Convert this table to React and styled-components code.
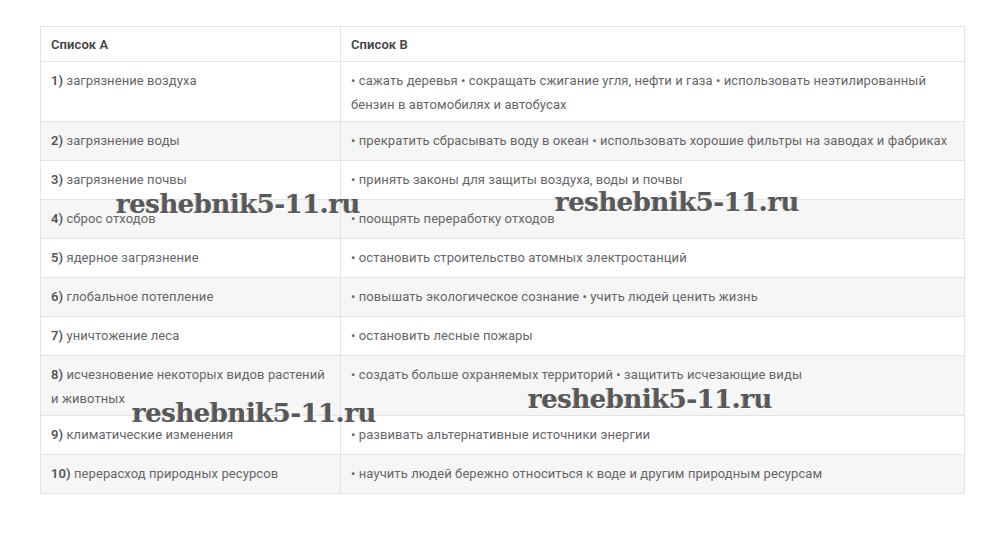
import React from 'react';
import styled, { createGlobalStyle } from 'styled-components';

const GlobalStyle = createGlobalStyle`
    body {
        margin: 0;
        background: #fff;
        font-family: Roboto, "Noto Sans", sans-serif;
    }
`

const rows = [
    ['1)', 'загрязнение воздуха', '• сажать деревья • сокращать сжигание угля, нефти и газа • использовать неэтилированный бензин в автомобилях и автобусах'],
    ['2)', 'загрязнение воды', '• прекратить сбрасывать воду в океан • использовать хорошие фильтры на заводах и фабриках'],
    ['3)', 'загрязнение почвы', '• принять законы для защиты воздуха, воды и почвы'],
    ['4)', 'сброс отходов', '• поощрять переработку отходов'],
    ['5)', 'ядерное загрязнение', '• остановить строительство атомных электростанций'],
    ['6)', 'глобальное потепление', '• повышать экологическое сознание • учить людей ценить жизнь'],
    ['7)', 'уничтожение леса', '• остановить лесные пожары'],
    ['8)', 'исчезновение некоторых видов растений и животных', '• создать больше охраняемых территорий • защитить исчезающие виды'],
    ['9)', 'климатические изменения', '• развивать альтернативные источники энергии'],
    ['10)', 'перерасход природных ресурсов', '• научить людей бережно относиться к воде и другим природным ресурсам'],
];

// watermark spots over the table
const marks = [
    { left: 116, top: 191 },
    { left: 555, top: 189 },
    { left: 132, top: 400 },
    { left: 528, top: 386 },
];

const App = () => {
    return (<Page>
        <GlobalStyle />
        <Table>
            <thead>
                <tr>
                    <Head>Список А</Head>
                    <Head>Список В</Head>
                </tr>
            </thead>
            <tbody>
                {rows.map((r, i) => (
                    <Row key={i} $grey={i % 2 === 1}>
                        <Cell><Num>{r[0]}</Num> {r[1]}</Cell>
                        <Cell>{r[2]}</Cell>
                    </Row>
                ))}
            </tbody>
        </Table>
        {marks.map((m, i) => (
            <Watermark key={i} style={{ left: m.left, top: m.top }}>reshebnik5-11.ru</Watermark>
        ))}
    </Page>);
}

export default App;

const Page = styled.div`
    position: relative;
    padding: 26px 35px 0 40px;
    height: 554px;
    box-sizing: border-box;
`

const Table = styled.table`
    width: 925px;
    border-collapse: collapse;
    border: 1px solid #e3e3e3;
    font-size: 13px;
    letter-spacing: 0.08px;
    color: #666;
`

const Head = styled.th`
    height: 35px;
    padding: 0 10px;
    text-align: left;
    font-weight: 600;
    color: #444;
    border: 1px solid #e3e3e3;
    box-sizing: border-box;
    &:first-child {
        width: 300px;
    }
`

const Row = styled.tr`
    background: ${p => p.$grey ? '#f6f6f6' : '#fff'};
`

const Cell = styled.td`
    height: 27px;
    padding: 7px 10px 4px;
    line-height: 24px;
    vertical-align: top;
    border: 1px solid #e3e3e3;
`

const Num = styled.span`
    font-weight: 600;
    color: #555;
`

const Watermark = styled.div`
    position: absolute;
    font-family: "DejaVu Serif", serif;
    font-weight: bold;
    font-size: 26px;
    line-height: 26px;
    color: #585858;
    letter-spacing: -0.5px;
    text-shadow: 1px 1px 0 #fff, -1px 0 0 #c8c8c8;
    white-space: nowrap;
    pointer-events: none;
`
